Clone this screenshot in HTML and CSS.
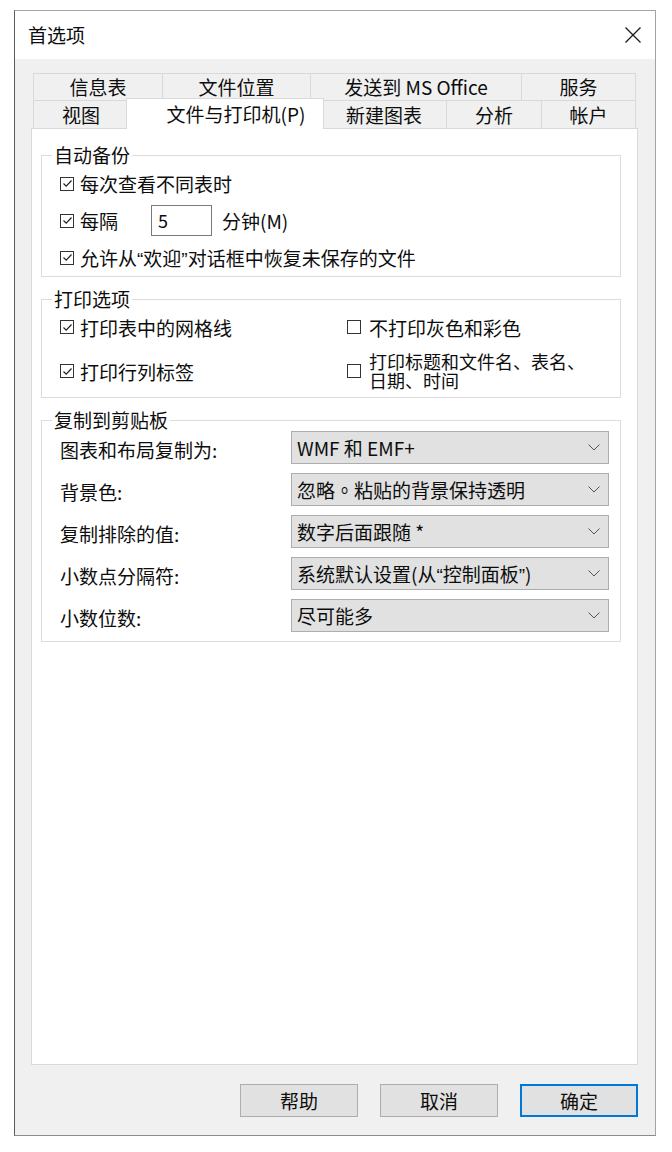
FILE: index.html
```html
<!DOCTYPE html>
<html>
    <head>
        <title>首选项</title>
        <meta charset="utf-8">
        <link rel="stylesheet" href="styles.css">
    </head>
    <body>
        <div class="dialog">
            <div class="titleBar">
                <span class="titleText">首选项</span>
                <svg class="closeIcon" width="18" height="18" viewBox="0 0 18 18">
                    <path d="M1.5 1.5L16.5 16.5M16.5 1.5L1.5 16.5" stroke="#1a1a1a" stroke-width="1.3" fill="none"/>
                </svg>
            </div>

            <div class="dialogBody">
                <div class="tabRow rowBack">
                    <div class="tab">信息表</div>
                    <div class="tab">文件位置</div>
                    <div class="tab">发送到 MS Office</div>
                    <div class="tab">服务</div>
                </div>
                <div class="tabRow rowFront">
                    <div class="tab">视图</div>
                    <div class="tab selected">文件与打印机(P)</div>
                    <div class="tab">新建图表</div>
                    <div class="tab">分析</div>
                    <div class="tab">帐户</div>
                </div>

                <div class="panel">
                    <!-- 自动备份 -->
                    <fieldset class="group backupGroup">
                        <legend>自动备份</legend>
                        <div class="checkRow">
                            <span class="box"><svg width="11" height="11" viewBox="0 0 11 11"><path d="M1.5 5.5L4.2 8.2L9.5 2.5" stroke="#222" stroke-width="1.2" fill="none"/></svg></span>
                            <span>每次查看不同表时</span>
                        </div>
                        <div class="checkRow">
                            <span class="box"><svg width="11" height="11" viewBox="0 0 11 11"><path d="M1.5 5.5L4.2 8.2L9.5 2.5" stroke="#222" stroke-width="1.2" fill="none"/></svg></span>
                            <span>每隔</span>
                            <span class="minutesInput">5</span>
                            <span class="minutesLabel">分钟(M)</span>
                        </div>
                        <div class="checkRow">
                            <span class="box"><svg width="11" height="11" viewBox="0 0 11 11"><path d="M1.5 5.5L4.2 8.2L9.5 2.5" stroke="#222" stroke-width="1.2" fill="none"/></svg></span>
                            <span>允许从<span class="quote">“</span>欢迎<span class="quote">”</span>对话框中恢复未保存的文件</span>
                        </div>
                    </fieldset>

                    <!-- 打印选项 -->
                    <fieldset class="group printGroup">
                        <legend>打印选项</legend>
                        <div class="printGrid">
                            <div class="checkRow">
                                <span class="box"><svg width="11" height="11" viewBox="0 0 11 11"><path d="M1.5 5.5L4.2 8.2L9.5 2.5" stroke="#222" stroke-width="1.2" fill="none"/></svg></span>
                                <span>打印表中的网格线</span>
                            </div>
                            <div class="checkRow rightCol">
                                <span class="box"></span>
                                <span>不打印灰色和彩色</span>
                            </div>
                            <div class="checkRow">
                                <span class="box"><svg width="11" height="11" viewBox="0 0 11 11"><path d="M1.5 5.5L4.2 8.2L9.5 2.5" stroke="#222" stroke-width="1.2" fill="none"/></svg></span>
                                <span>打印行列标签</span>
                            </div>
                            <div class="checkRow rightCol">
                                <span class="box"></span>
                                <span class="twoLines"><span class="lineOne">打印标题和文件名、表名、</span><span class="lineTwo">日期、时间</span></span>
                            </div>
                        </div>
                    </fieldset>

                    <!-- 复制到剪贴板 -->
                    <fieldset class="group copyGroup">
                        <legend>复制到剪贴板</legend>
                        <div class="copyGrid">
                            <span class="copyLabel">图表和布局复制为:</span>
                            <div class="dropdown"><span>WMF 和 EMF+</span><svg class="chevron" width="12" height="7" viewBox="0 0 12 7"><path d="M0.5 0.5L6 6L11.5 0.5" stroke="#555" stroke-width="1" fill="none"/></svg></div>

                            <span class="copyLabel">背景色:</span>
                            <div class="dropdown"><span>忽略<span class="dot">。</span>粘贴的背景保持透明</span><svg class="chevron" width="12" height="7" viewBox="0 0 12 7"><path d="M0.5 0.5L6 6L11.5 0.5" stroke="#555" stroke-width="1" fill="none"/></svg></div>

                            <span class="copyLabel">复制排除的值:</span>
                            <div class="dropdown"><span>数字后面跟随 *</span><svg class="chevron" width="12" height="7" viewBox="0 0 12 7"><path d="M0.5 0.5L6 6L11.5 0.5" stroke="#555" stroke-width="1" fill="none"/></svg></div>

                            <span class="copyLabel">小数点分隔符:</span>
                            <div class="dropdown"><span>系统默认设置(从<span class="quote">“</span>控制面板<span class="quote">”</span>)</span><svg class="chevron" width="12" height="7" viewBox="0 0 12 7"><path d="M0.5 0.5L6 6L11.5 0.5" stroke="#555" stroke-width="1" fill="none"/></svg></div>

                            <span class="copyLabel">小数位数:</span>
                            <div class="dropdown"><span>尽可能多</span><svg class="chevron" width="12" height="7" viewBox="0 0 12 7"><path d="M0.5 0.5L6 6L11.5 0.5" stroke="#555" stroke-width="1" fill="none"/></svg></div>
                        </div>
                    </fieldset>
                </div>

                <div class="footer">
                    <button class="dlgButton">帮助</button>
                    <button class="dlgButton">取消</button>
                    <button class="dlgButton okButton">确定</button>
                </div>
            </div>
        </div>
    </body>
</html>
```

FILE: styles.css
```css
body {margin: 0px; background: #fff; font-family: "Noto Sans CJK SC", sans-serif; font-size: 19px; color: #0d0d0d;}

.dialog {display: flex; flex-direction: column; box-sizing: border-box; width: 642px; height: 1126px; margin: 10px 0px 0px 14px; border: 1px solid #a3a3a3; border-left-color: #5c5c5c; border-bottom-color: #8c8c8c; background: #f0f0f0;}

/* title bar */
.titleBar {display: flex; justify-content: space-between; align-items: center; height: 48px; padding: 0px 13px 0px 13px; background: #fff;}
.titleText {line-height: 24px;}
.closeIcon {display: block;}

.dialogBody {flex: 1; display: flex; flex-direction: column; padding: 14px 17px 0px 16px;}

/* tabs */
.tabRow {display: grid; margin: 0px 2px;}
.rowBack {grid-template-columns: 129px 148px 211px 1fr; height: 27px;}
.rowFront {grid-template-columns: 95px 194px 124px 95px 1fr; height: 28px;}
.tab {display: flex; justify-content: center; align-items: center; border: 1px solid #d9d9d9; border-right: none; border-bottom: none; line-height: 20px; white-space: nowrap;}
.tab:last-child {border-right: 1px solid #d9d9d9;}
.tab.selected {position: relative; z-index: 1; margin: -2px -2px -1px -2px; padding-left: 22px; background: #fff; border-right: 1px solid #d9d9d9;}
.tab.selected + .tab {border-left: none;}

.panel {flex: 1; background: #fff; border: 1px solid #d9d9d9;}

/* group boxes */
.group {margin: 12px 16px 0px 9px; padding: 0px 11px 0px 10px; min-width: 0px; border: 1px solid #dcdcdc;}
.group legend {padding: 0px 2px; line-height: 20px;}
.backupGroup {margin-top: 16px;}

.checkRow {display: flex; align-items: center; height: 37px; padding-left: 8px; white-space: nowrap;}
.box {display: flex; justify-content: center; align-items: center; flex-shrink: 0; box-sizing: border-box; width: 14px; height: 14px; margin-right: 6px; border: 1px solid #333; background: #fff;}
.box svg {display: block;}
.quote {font-family: "Liberation Sans", sans-serif;}

.minutesInput {box-sizing: border-box; width: 61px; height: 31px; margin-left: 33px; padding-left: 6px; border: 1px solid #7a7a7a; line-height: 29px; font-size: 18px;}
.minutesLabel {margin-left: 10px;}

.printGrid {display: grid; grid-template-columns: 295px 1fr; grid-template-rows: 36px 52px;}
.printGrid .checkRow {height: auto;}
.rightCol {padding-left: 0px;}
.rightCol .box {margin-right: 8px;}
.twoLines {display: flex; flex-direction: column; font-size: 18px; line-height: 19px;}
.lineOne, .lineTwo {display: block; height: 19px;}

.copyGrid {display: grid; grid-template-columns: 231px 1fr; grid-auto-rows: 33px; row-gap: 9px; padding: 1px 0px 9px 8px;}
.copyLabel {display: flex; align-items: center; padding-top: 4px;}
.dropdown {display: flex; justify-content: space-between; align-items: center; padding: 0px 8px 0px 5px; background: #e1e1e1; border: 1px solid #adadad; white-space: nowrap;}
.dot {font-family: "Noto Sans CJK TC", sans-serif;}
.chevron {display: block;}

/* buttons */
.footer {display: flex; justify-content: flex-end; gap: 22px; padding: 19px 0px 18px 0px;}
.dlgButton {box-sizing: border-box; width: 118px; height: 33px; padding: 0px; background: #e1e1e1; border: 1px solid #adadad; font-family: "Noto Sans CJK SC", sans-serif; font-size: 19px; color: #0d0d0d;}
.okButton {border: 2px solid #0078d7;}
```
